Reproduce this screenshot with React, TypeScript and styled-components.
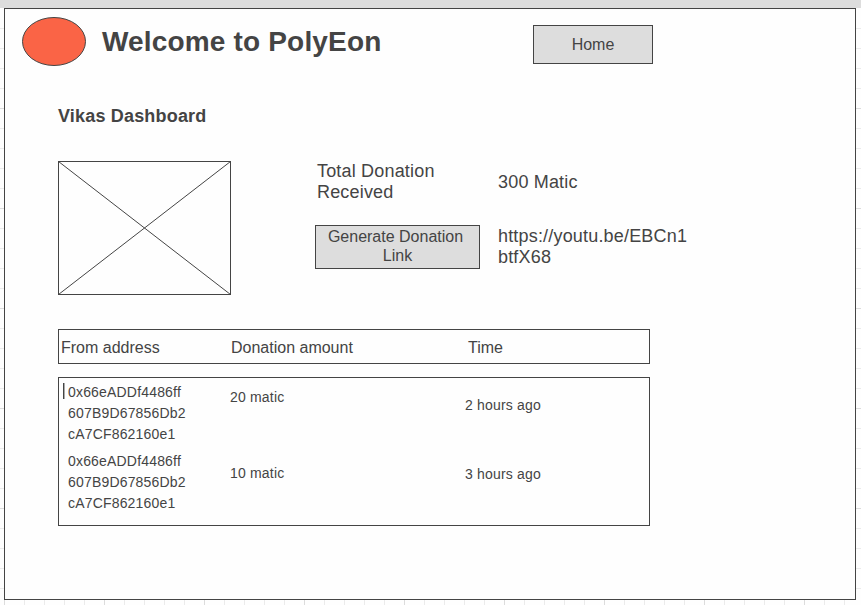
import React from "react";
import styled, { createGlobalStyle } from "styled-components";

const ink = "#444444";
const fill = "#dddddd";

const GlobalStyle = createGlobalStyle`
  *, *::before, *::after { box-sizing: border-box; }
  body {
    margin: 0;
    color: ${ink};
    font-family: "Liberation Sans", Arial, sans-serif;
    overflow: hidden;
  }
`;

const Canvas = styled.div`
  width: 861px;
  height: 605px;
  padding: 8px 5px 5px 4px;
  background-color: #fefefe;
  background-image:
    linear-gradient(${fill}, ${fill}),
    linear-gradient(#fefefe, #fefefe),
    linear-gradient(90deg, #dcdcdc 1px, transparent 1px),
    linear-gradient(#dcdcdc 1px, transparent 1px),
    linear-gradient(90deg, #ebebeb 1px, transparent 1px),
    linear-gradient(#ebebeb 1px, transparent 1px);
  background-size: 100% 8px, 100% 9px, 100px 100px, 100px 100px, 20px 20px, 20px 20px;
  background-position: 0 0, 0 0, 4px 0, 0 8px, 4px 0, 0 8px;
  background-repeat: no-repeat, no-repeat, repeat, repeat, repeat, repeat;
`;

const Page = styled.main`
  height: 592px;
  border: 1px solid ${ink};
  background: #fefefe;
`;

const Header = styled.header`
  display: flex;
  align-items: flex-start;
  height: 88px;
  padding: 8px 0 0 17px;
`;

const Logo = styled.svg`
  display: block;
  flex: none;
  width: 64px;
  height: 49px;
`;

const Title = styled.h1`
  width: 431px;
  margin: 9px 0 0 16px;
  font-size: 28px;
  line-height: 32px;
  letter-spacing: 0.17px;
`;

const Button = styled.button<{ $width: number; $height: number; $padding?: string }>`
  display: flex;
  align-items: center;
  justify-content: center;
  width: ${(p) => p.$width}px;
  height: ${(p) => p.$height}px;
  padding: ${(p) => p.$padding ?? "0 10px"};
  border: 1px solid ${ink};
  border-radius: 0;
  background: ${fill};
  color: ${ink};
  font-family: inherit;
  font-size: 16px;
  line-height: 19px;
  text-align: center;
`;

const HomeSlot = styled.nav`
  padding-top: 8px;
`;

const Content = styled.div`
  width: 700px;
  margin-left: 53px;
`;

const Heading = styled.h2`
  height: 64px;
  margin: 0;
  padding-top: 9px;
  font-size: 18px;
  line-height: 21px;
  letter-spacing: 0.18px;
`;

const Overview = styled.section`
  display: flex;
  gap: 84px;
  height: 168px;
`;

const Placeholder = styled.svg`
  display: block;
  flex: none;
  width: 173px;
  height: 134px;
`;

const Summary = styled.div`
  display: grid;
  grid-template-columns: 165px 192px;
  grid-template-rows: 42px 44px;
  gap: 22px 18px;
  align-items: center;
  align-content: start;
`;

const Label = styled.div<{ $indent?: number }>`
  padding-left: ${(p) => p.$indent ?? 0}px;
  font-size: 18px;
  line-height: 21px;
  letter-spacing: 0.18px;
`;

const ButtonText = styled.span<{ $trailing?: number }>`
  display: block;
  padding-right: ${(p) => p.$trailing ?? 0}px;
  white-space: nowrap;
`;

const TableHead = styled.div`
  display: grid;
  grid-template-columns: 170px 237px 1fr;
  align-items: center;
  width: 592px;
  height: 35px;
  padding: 2px 0 0 2px;
  border: 1px solid ${ink};
  font-size: 16px;
  line-height: 19px;
`;

const TableBody = styled.div`
  width: 592px;
  height: 149px;
  margin-top: 13px;
  padding-top: 4px;
  border: 1px solid ${ink};
`;

const Row = styled.div`
  display: grid;
  grid-template-columns: 171px 235px 1fr;
  height: 69px;
  font-size: 14px;
  line-height: 21px;
  letter-spacing: 0.18px;
`;

const Address = styled.div<{ $caret?: boolean }>`
  display: flex;
  padding-left: 4px;

  &::before {
    content: "";
    width: 2px;
    height: 16px;
    margin: 1px 3px 0 0;
    background: ${(p) => (p.$caret ? `linear-gradient(90deg, ${ink} 1px, #aaaaaa 1px)` : "none")};
  }
`;

const Cell = styled.div<{ $top: number }>`
  padding-top: ${(p) => p.$top}px;
`;

const addressLines = ["0x66eADDf4486ff", "607B9D67856Db2", "cA7CF862160e1"];

const donations = [
  { amount: "20 matic", time: "2 hours ago", amountTop: 5, timeTop: 13, active: true },
  { amount: "10 matic", time: "3 hours ago", amountTop: 12, timeTop: 13, active: false },
];

export default function App() {
  return (
    <>
      <GlobalStyle />
      <Canvas>
        <Page>
          <Header>
            <Logo viewBox="0 0 64 49" aria-hidden="true">
              <ellipse cx="32" cy="24.5" rx="31.5" ry="24" fill="#fa6446" stroke={ink} />
            </Logo>
            <Title>Welcome to PolyEon</Title>
            <HomeSlot>
              <Button $width={120} $height={39}>Home</Button>
            </HomeSlot>
          </Header>
          <Content>
            <Heading>Vikas Dashboard</Heading>
            <Overview>
              <Placeholder viewBox="0 0 173 134" aria-hidden="true">
                <rect x="0.5" y="0.5" width="172" height="133" fill="none" stroke={ink} />
                <path d="M.5 .5 172.5 133.5M172.5 .5 .5 133.5" stroke={ink} />
              </Placeholder>
              <Summary>
                <Label $indent={2}>Total Donation<br />Received</Label>
                <Label>300 Matic</Label>
                <Button $width={165} $height={44} $padding="0 0 2px">
                  <span>
                    <ButtonText $trailing={4}>Generate Donation</ButtonText>
                    <ButtonText>Link</ButtonText>
                  </span>
                </Button>
                <Label>https://youtu.be/EBCn1<br />btfX68</Label>
              </Summary>
            </Overview>
            <TableHead>
              <span>From address</span>
              <span>Donation amount</span>
              <span>Time</span>
            </TableHead>
            <TableBody>
              {donations.map((d) => (
                <Row key={d.amount}>
                  <Address $caret={d.active}>
                    <div>
                      {addressLines.map((line) => (
                        <div key={line}>{line}</div>
                      ))}
                    </div>
                  </Address>
                  <Cell $top={d.amountTop}>{d.amount}</Cell>
                  <Cell $top={d.timeTop}>{d.time}</Cell>
                </Row>
              ))}
            </TableBody>
          </Content>
        </Page>
      </Canvas>
    </>
  );
}
